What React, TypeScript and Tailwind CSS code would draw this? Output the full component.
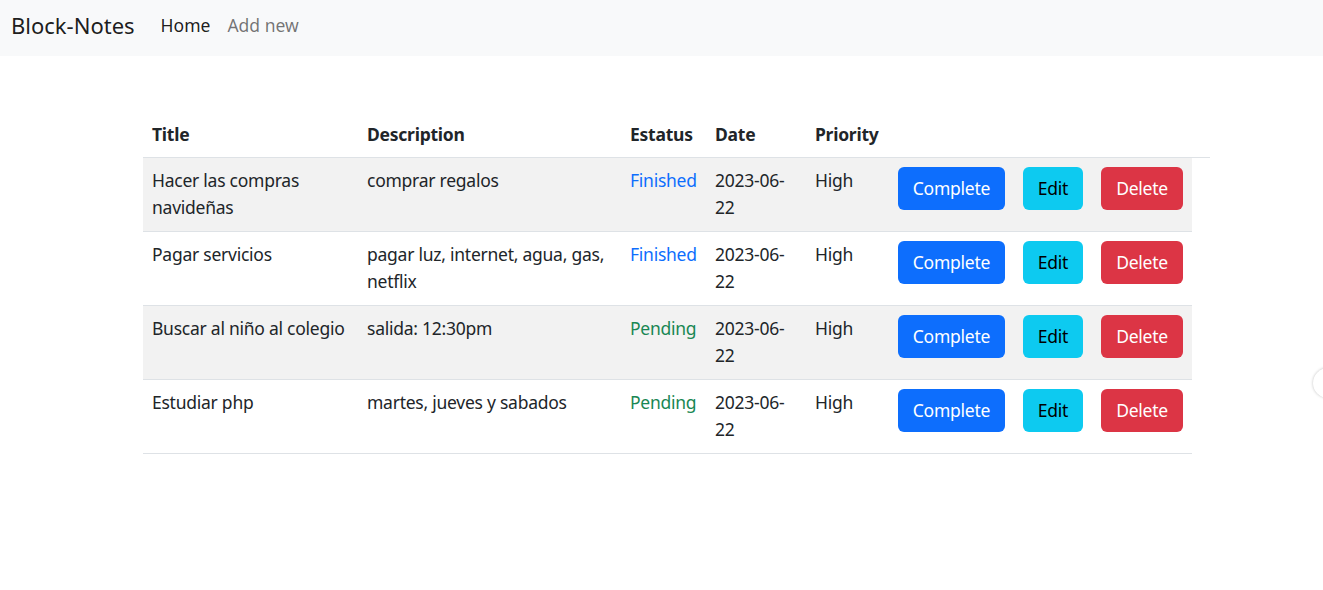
const notes = [
  { title: "Hacer las compras navideñas", desc: "comprar regalos", status: "Finished", date: "2023-06-22", priority: "High" },
  { title: "Pagar servicios", desc: "pagar luz, internet, agua, gas, netflix", status: "Finished", date: "2023-06-22", priority: "High" },
  { title: "Buscar al niño al colegio", desc: "salida: 12:30pm", status: "Pending", date: "2023-06-22", priority: "High" },
  { title: "Estudiar php", desc: "martes, jueves y sabados", status: "Pending", date: "2023-06-22", priority: "High" },
];

function Navbar() {
  return (
    <nav className="h-14 bg-[#f8f9fa] flex items-center px-[11px] pb-[5px]">
      <span className="text-[22px] text-black/90 mr-[26px]">Block-Notes</span>
      <a className="text-[17.5px] text-black/90 mr-[17px]">Home</a>
      <a className="text-[17.5px] text-black/55">Add new</a>
    </nav>
  );
}

export default function App() {
  const td = "px-[9px] pt-[9px] pb-[10px] align-top";
  const th = "px-[9px] pt-[9px] pb-[9px] align-top text-left font-bold";
  return (
    <div className="min-h-screen bg-white text-[#212529] font-['Segoe_UI','Noto_Sans',sans-serif] relative overflow-hidden">
      <Navbar />
      <div className="pl-[143px] pt-[56px]">
        <table className="border-collapse text-[17.5px] leading-[27px] tracking-[-0.25px] table-fixed w-[1067px]">
          <colgroup>
            <col className="w-[215px]" />
            <col className="w-[263px]" />
            <col className="w-[85px]" />
            <col className="w-[100px]" />
            <col className="w-[83px]" />
            <col className="w-[125px]" />
            <col className="w-[78px]" />
            <col className="w-[100px]" />
            <col className="w-[18px]" />
          </colgroup>
          <thead>
            <tr className="border-b border-[#dee2e6]">
              <th className={th}>Title</th>
              <th className={th}>Description</th>
              <th className={th}>Estatus</th>
              <th className={th}>Date</th>
              <th className={th}>Priority</th>
              <th />
              <th />
              <th />
              <th />
            </tr>
          </thead>
          <tbody>
            {notes.map((n, i) => {
              const cell = `${td} border-b border-[#dee2e6] ${i % 2 === 0 ? "bg-[#f2f2f2]" : ""}`;
              return (
                <tr key={i}>
                  <td className={cell}>{n.title}</td>
                  <td className={cell}>{n.desc}</td>
                  <td className={`${cell} ${n.status === "Finished" ? "text-[#0d6efd]" : "text-[#198754]"}`}>{n.status}</td>
                  <td className={cell}>{n.date.slice(0, 8)}<br />{n.date.slice(8)}</td>
                  <td className={cell}>{n.priority}</td>
                  <td className={cell}>
                    <button className="h-[43px] w-[107px] rounded-[6px] bg-[#0d6efd] text-white">Complete</button>
                  </td>
                  <td className={cell}>
                    <button className="h-[43px] w-[60px] rounded-[6px] bg-[#0dcaf0] text-black">Edit</button>
                  </td>
                  <td className={cell}>
                    <button className="h-[43px] w-[82px] rounded-[6px] bg-[#dc3545] text-white">Delete</button>
                  </td>
                </tr>
              );
            })}
          </tbody>
        </table>
      </div>
      <div className="absolute left-[1313px] top-[368px] w-[30px] h-[30px] rounded-full bg-white shadow-[0_0_3px_rgba(0,0,0,0.25)]" />
    </div>
  );
}
